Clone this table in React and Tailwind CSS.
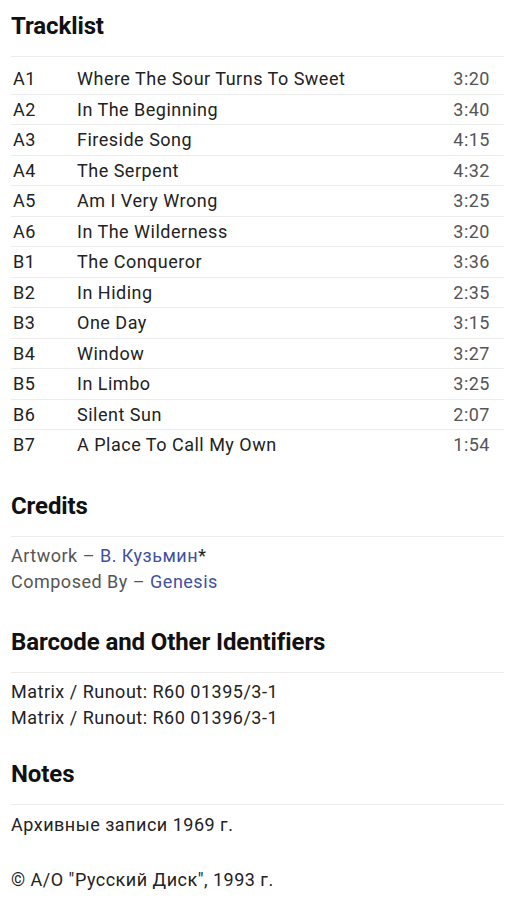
import React from 'react';

const tracks = [
  ['A1', 'Where The Sour Turns To Sweet', '3:20'],
  ['A2', 'In The Beginning', '3:40'],
  ['A3', 'Fireside Song', '4:15'],
  ['A4', 'The Serpent', '4:32'],
  ['A5', 'Am I Very Wrong', '3:25'],
  ['A6', 'In The Wilderness', '3:20'],
  ['B1', 'The Conqueror', '3:36'],
  ['B2', 'In Hiding', '2:35'],
  ['B3', 'One Day', '3:15'],
  ['B4', 'Window', '3:27'],
  ['B5', 'In Limbo', '3:25'],
  ['B6', 'Silent Sun', '2:07'],
  ['B7', 'A Place To Call My Own', '1:54'],
];

const Heading = ({ children }) => (
  <h2 className="text-[24px] font-bold leading-[28px] tracking-[-0.1px] text-[#111] pb-4 border-b border-[#ececec]">
    {children}
  </h2>
);

export default function App() {
  return (
    <div
      className="bg-white min-h-screen px-[11px] pt-3 pb-4 text-[18px] tracking-[0.5px] text-[#222]"
      style={{ fontFamily: 'Roboto, "Noto Sans", sans-serif' }}
    >
      {/* Tracklist */}
      <section>
        <Heading>Tracklist</Heading>
        <div className="pt-[6px]">
          {tracks.map(([pos, title, dur], i) => (
            <div
              key={pos}
              className={`flex items-center h-[30.5px] ${i > 0 ? 'border-t border-[#ececec]' : ''}`}
            >
              <span className="w-[66px] pl-[2px] shrink-0">{pos}</span>
              <span className="flex-1">{title}</span>
              <span className="pr-[14px] text-[#555]">{dur}</span>
            </div>
          ))}
        </div>
      </section>

      {/* Credits */}
      <section className="mt-[32px]">
        <Heading>Credits</Heading>
        <div className="pt-[6px] leading-[26px] text-[#555]">
          <div>
            Artwork – <a className="text-[#3f51a0]">В. Кузьмин</a><span className="text-[#222]">*</span>
          </div>
          <div>
            Composed By – <a className="text-[#3f51a0]">Genesis</a>
          </div>
        </div>
      </section>

      {/* Identifiers */}
      <section className="mt-[33px]">
        <Heading>Barcode and Other Identifiers</Heading>
        <div className="pt-[6px] leading-[26px]">
          <div>Matrix / Runout: R60 01395/3-1</div>
          <div>Matrix / Runout: R60 01396/3-1</div>
        </div>
      </section>

      {/* Notes */}
      <section className="mt-[29px]">
        <Heading>Notes</Heading>
        <div className="pt-[6px] leading-[27.5px]">
          Архивные записи 1969 г.
          <br />
          <br />
          © А/О "Русский Диск", 1993 г.
        </div>
      </section>
    </div>
  );
}
